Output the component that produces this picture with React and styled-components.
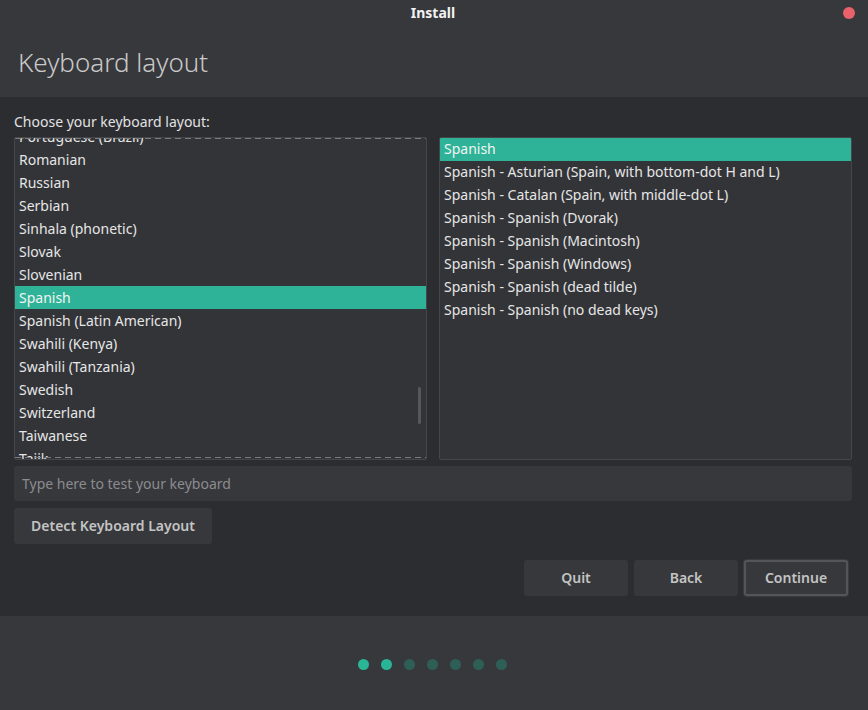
import React from "react";
import styled, { createGlobalStyle } from "styled-components";

const leftItems = [
  "Portuguese (Brazil)",
  "Romanian",
  "Russian",
  "Serbian",
  "Sinhala (phonetic)",
  "Slovak",
  "Slovenian",
  "Spanish",
  "Spanish (Latin American)",
  "Swahili (Kenya)",
  "Swahili (Tanzania)",
  "Swedish",
  "Switzerland",
  "Taiwanese",
  "Tajik",
];

const rightItems = [
  "Spanish",
  "Spanish - Asturian (Spain, with bottom-dot H and L)",
  "Spanish - Catalan (Spain, with middle-dot L)",
  "Spanish - Spanish (Dvorak)",
  "Spanish - Spanish (Macintosh)",
  "Spanish - Spanish (Windows)",
  "Spanish - Spanish (dead tilde)",
  "Spanish - Spanish (no dead keys)",
];

const steps = [true, true, false, false, false, false, false];

export default function App() {
  return (
    <>
      <Global />
      <Window>
        <Header>
          <TitleBar>
            <WinTitle>Install</WinTitle>
            <CloseDot />
          </TitleBar>
          <PageTitle>Keyboard layout</PageTitle>
        </Header>
        <Content>
          <Label>Choose your keyboard layout:</Label>
          <Lists>
            <ListBox>
              <Rows offset={-13}>
                {leftItems.map((t) => (
                  <Row key={t} selected={t === "Spanish"}>
                    {t}
                  </Row>
                ))}
              </Rows>
              <DashTop />
              <DashBottom />
              <ScrollThumb />
            </ListBox>
            <ListBox>
              <Rows>
                {rightItems.map((t, i) => (
                  <Row key={t} selected={i === 0} tight>
                    {t}
                  </Row>
                ))}
              </Rows>
            </ListBox>
          </Lists>
          <TestEntry placeholder="Type here to test your keyboard" />
          <DetectRow>
            <Button width="198px">Detect Keyboard Layout</Button>
          </DetectRow>
          <Actions>
            <Button>Quit</Button>
            <Button>Back</Button>
            <Button primary>Continue</Button>
          </Actions>
        </Content>
        <Footer>
          {steps.map((on, i) => (
            <Dot key={i} on={on} />
          ))}
        </Footer>
      </Window>
    </>
  );
}

const Global = createGlobalStyle`
  html, body {
    margin: 0;
    padding: 0;
    background: #37383c;
  }
  body {
    font-family: "Noto Sans", "Open Sans", sans-serif;
  }
`;

const Window = styled.div`
  width: 868px;
  height: 710px;
  display: flex;
  flex-direction: column;
  background: #2c2d31;
  overflow: hidden;
`;

const Header = styled.div`
  height: 97px;
  background: #37383c;
  display: flex;
  flex-direction: column;
`;

const TitleBar = styled.div`
  height: 24px;
  display: flex;
  align-items: center;
  justify-content: center;
  position: relative;
`;

const WinTitle = styled.div`
  color: #f2f2f2;
  font-weight: 700;
  font-size: 14px;
  margin-left: -2px;
`;

const CloseDot = styled.div`
  position: absolute;
  right: 13px;
  top: 7px;
  width: 12px;
  height: 12px;
  border-radius: 50%;
  background: #e9616a;
`;

const PageTitle = styled.h1`
  margin: 23px 0 0 18px;
  font-size: 26px;
  font-weight: 300;
  color: #c9c9c9;
  line-height: 1.2;
`;

const Content = styled.div`
  flex: 1;
  display: flex;
  flex-direction: column;
  padding: 15px 16px 0 14px;
`;

const Label = styled.div`
  color: #e2e2e2;
  font-size: 14px;
  line-height: 20px;
  margin-bottom: 5px;
`;

const Lists = styled.div`
  display: grid;
  grid-template-columns: 413px 413px;
  gap: 12px;
  height: 323px;
`;

const ListBox = styled.div`
  position: relative;
  background: #333438;
  border: 1px solid #45464a;
  border-radius: 2px;
  overflow: hidden;
`;

const Rows = styled.div`
  margin-top: ${(p) => (p.offset || 0) + "px"};
`;

const Row = styled.div`
  height: 23px;
  line-height: ${(p) => (p.tight ? "21px" : "23px")};
  padding-left: 4px;
  font-size: 14px;
  color: ${(p) => (p.selected ? "#f4f4f4" : "#e6e6e6")};
  background: ${(p) => (p.selected ? "#2eb398" : "transparent")};
  white-space: nowrap;
`;

const Dash = styled.div`
  position: absolute;
  left: 0;
  right: 0;
  height: 1px;
  background: repeating-linear-gradient(
    to right,
    #7a7b7f 0 6px,
    transparent 6px 10px
  );
`;

const DashTop = styled(Dash)`
  top: 0;
`;

const DashBottom = styled(Dash)`
  bottom: 1px;
`;

const ScrollThumb = styled.div`
  position: absolute;
  right: 5px;
  top: 249px;
  width: 3px;
  height: 37px;
  border-radius: 2px;
  background: #56575b;
`;

const TestEntry = styled.input`
  margin-top: 6px;
  height: 35px;
  box-sizing: border-box;
  width: 838px;
  border: none;
  border-radius: 3px;
  background: #37383c;
  padding: 0 8px;
  font-family: inherit;
  font-size: 14px;
  color: #ddd;
  outline: none;

  &::placeholder {
    color: #8b8c8f;
  }
`;

const DetectRow = styled.div`
  display: flex;
  margin-top: 7px;
`;

const Button = styled.div`
  box-sizing: border-box;
  width: ${(p) => p.width || "104px"};
  height: 36px;
  padding-bottom: 2px;
  display: flex;
  align-items: center;
  justify-content: center;
  border-radius: 3px;
  background: #37383c;
  color: #c4c4c4;
  font-weight: 600;
  font-size: 14px;
  ${(p) =>
    p.primary &&
    `
    border: 2px solid #54555a;
    box-shadow: 0 0 0 1px #3a3b3f;
  `}
`;

const Actions = styled.div`
  display: flex;
  justify-content: flex-end;
  gap: 6px;
  margin-top: 16px;
  padding-right: 4px;
`;

const Footer = styled.div`
  height: 94px;
  box-sizing: border-box;
  padding-top: 2px;
  background: #37383c;
  display: flex;
  justify-content: center;
  align-items: center;
  gap: 12px;
  margin-left: -3px;
`;

const Dot = styled.div`
  width: 11px;
  height: 11px;
  border-radius: 50%;
  background: ${(p) => (p.on ? "#2bb597" : "#2e5f56")};
`;
